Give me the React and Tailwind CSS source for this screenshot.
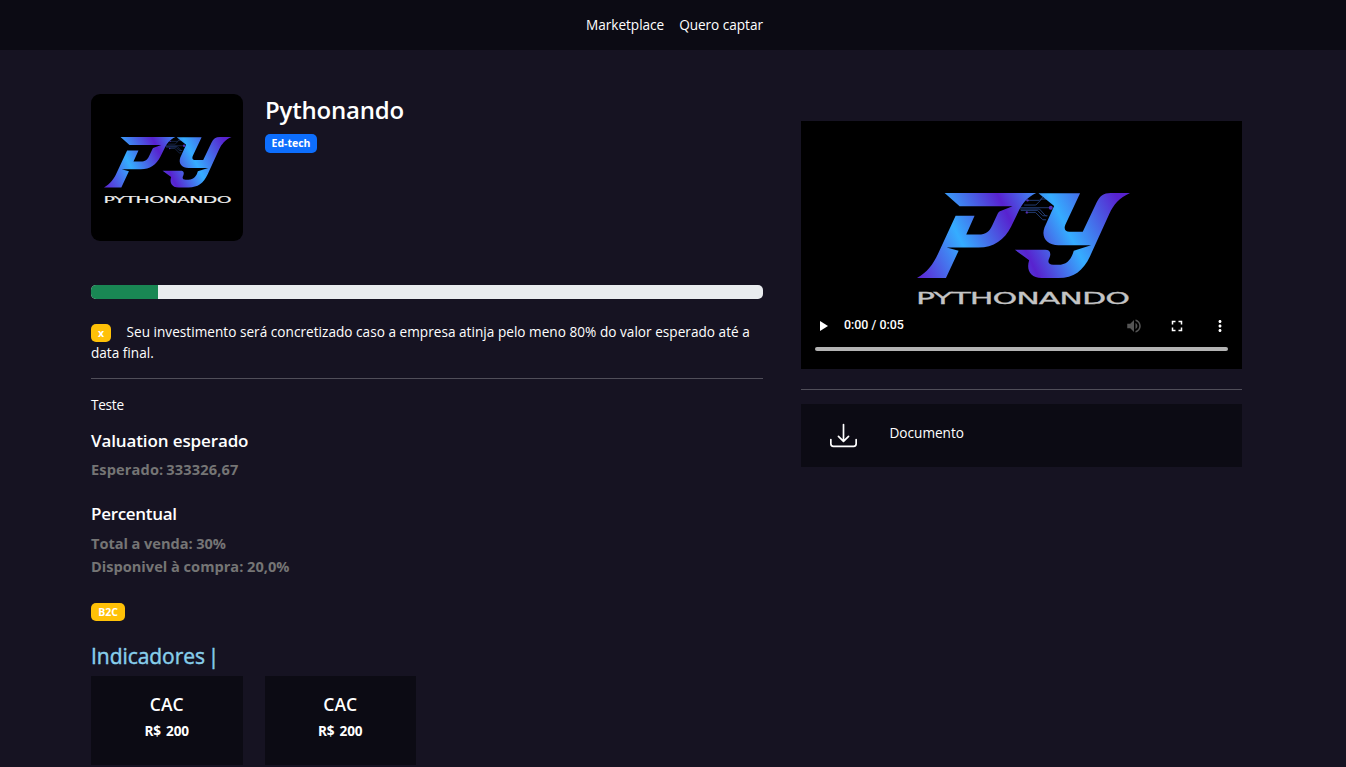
import React from "react";

function Logo({ id, className, textFill }) {
  return (
    <svg viewBox="50 40 640 350" preserveAspectRatio="none" className={className} aria-hidden="true">
      <defs>
        <linearGradient id={id} gradientUnits="userSpaceOnUse" x1="60" y1="290" x2="628" y2="6">
          <stop offset="0" stopColor="#5b2bd6" />
          <stop offset="0.246" stopColor="#35adff" />
          <stop offset="0.5" stopColor="#5822cf" />
          <stop offset="0.72" stopColor="#35adff" />
          <stop offset="1" stopColor="#5822cf" />
        </linearGradient>
      </defs>
      <g fill="none" stroke="#26407a" strokeWidth="2.8">
        <path d="M372 76h35l18-18h14M360 84h88M362 92h50l16 16h14M382 62h36l12-12M382 98h24l22 22h10M360 88h58l20 22" />
      </g>
      <g fill="#5430b8">
        <circle cx="452" cy="84" r="6" />
        <circle cx="382" cy="62" r="3.5" />
        <circle cx="380" cy="98" r="3.5" />
      </g>
      <g fill={`url(#${id})`}>
        <path d="M133 40H408C380 53 366 72 354 97L333 140C313 180 280 203 235 203H139L175 213L137 294H50C82 277 100 251 115 218L166 108H223L198 164H235C257 164 268 155 276 137L292 103C294 98 297 95 303 93L337 80H178Z" />
        <path d="M415 41H540L496 134C490 148 496 156 508 156H548L590 68C599 49 611 40 632 40H690C658 54 640 76 628 102L570 229C549 273 521 294 475 294H425C389 294 378 268 387 241L344 210H435C449 210 454 219 448 234C441 247 446 255 459 255H474C501 255 514 238 521 213L573 196H475C441 196 422 174 433 143L462 79Z" />
      </g>
      <text
        x="47"
        y="371"
        fontFamily="'DejaVu Sans', sans-serif"
        fontSize="47"
        letterSpacing="-1.5"
        textLength="640"
        lengthAdjust="spacingAndGlyphs"
        fill={textFill}
        stroke={textFill}
        strokeWidth="0.8"
      >
        PYTHONANDO
      </text>
    </svg>
  );
}

function Player() {
  return (
    <div className="flex h-[248px] flex-col bg-black">
      <div className="flex justify-center pt-[72px] pl-[4px]">
        <Logo id="video-logo" textFill="#c4c4c4" className="h-[117px] w-[213px]" />
      </div>
      <div className="mt-[4.5px] flex h-[22px] items-center pl-[18px] pr-[13px]">
        <svg width="10" height="12" viewBox="0 0 10 12" fill="#fff" className="mt-[1px]">
          <path d="M1 1v10l8-5z" />
        </svg>
        <span className="ml-[15px] -mt-[1px] font-['Roboto',sans-serif] text-[12.4px] font-medium leading-[16px] text-white">
          0:00 / 0:05
        </span>
        <div className="ml-auto flex items-center gap-[25px] text-white">
          <svg width="18" height="18" viewBox="0 0 24 24" fill="#555">
            <path d="M3 9v6h4l5 5V4L7 9H3zm13.5 3c0-1.77-1.02-3.29-2.5-4.03v8.05c1.48-.73 2.5-2.25 2.5-4.02zM14 3.23v2.06c2.89.86 5 3.54 5 6.71s-2.11 5.85-5 6.71v2.06c4.01-.91 7-4.49 7-8.77s-2.99-7.86-7-8.77z" />
          </svg>
          <svg width="18" height="18" viewBox="0 0 24 24" fill="#fff">
            <path d="M7 14H5v5h5v-2H7v-3zm-2-4h2V7h3V5H5v5zm12 7h-3v2h5v-5h-2v3zM14 5v2h3v3h2V5h-5z" />
          </svg>
          <svg width="18" height="18" viewBox="0 0 24 24" fill="#fff">
            <path d="M12 8c1.1 0 2-.9 2-2s-.9-2-2-2-2 .9-2 2 .9 2 2 2zm0 2c-1.1 0-2 .9-2 2s.9 2 2 2 2-.9 2-2-.9-2-2-2zm0 6c-1.1 0-2 .9-2 2s.9 2 2 2 2-.9 2-2-.9-2-2-2z" />
          </svg>
        </div>
      </div>
      <div className="mx-[14px] mt-[10px] h-[4px] rounded-full bg-[#b3b3b3]" />
    </div>
  );
}

function Indicator({ name, value }) {
  return (
    <div className="h-[89px] w-[151.5px] bg-[#0c0b14] pt-[17px] text-center">
      <div className="text-[17.5px] font-semibold leading-[22px]">{name}</div>
      <div className="mt-[5px] text-[13.6px] font-bold leading-[22px] tracking-[-0.1px] [word-spacing:1.5px]">{value}</div>
    </div>
  );
}

export default function App() {
  return (
    <div className="h-[767px] overflow-hidden bg-[#161322] font-['Open_Sans','Noto_Sans',sans-serif] text-[13.6px] leading-[21.6px] text-white">
      <header className="flex h-[50px] items-center justify-center gap-[15px] bg-[#0c0b14] pl-[3px]">
        <a className="whitespace-nowrap tracking-[-0.03px]">Marketplace</a>
        <a className="whitespace-nowrap tracking-[-0.03px]">Quero captar</a>
      </header>

      <main className="flex items-start gap-[38px] pl-[91px] pt-[44px]">
        <section className="w-[672px]">
          <div className="flex gap-[22px]">
            <div className="flex h-[147px] w-[152px] justify-center rounded-[9px] bg-black pl-[2px] pt-[42.5px]">
              <Logo id="company-logo" textFill="#eeeeee" className="h-[69.5px] w-[127.5px]" />
            </div>
            <div>
              <h1 className="mt-[1px] text-[24px] font-semibold leading-[30px] tracking-[-0.2px]">Pythonando</h1>
              <span className="mt-[9px] flex h-[19px] w-[52px] items-center justify-center rounded-[5px] bg-[#0d6efd] text-[10.5px] font-bold leading-none">
                Ed-tech
              </span>
            </div>
          </div>

          <div className="mt-[44px] h-[14px] overflow-hidden rounded-[5px] bg-[#e9ecef]">
            <div className="h-full w-[10%] bg-[#198754]" />
          </div>

          <div className="mt-[22px]">
            <div className="flex h-[21px] items-center">
              <span className="mr-[15.5px] mt-[3px] flex h-[18px] w-[20px] items-center justify-center rounded-[5px] bg-[#ffc107] text-[10.5px] font-bold leading-none">
                x
              </span>
              <span className="whitespace-nowrap tracking-[0.024px]">
                Seu investimento será concretizado caso a empresa atinja pelo meno 80% do valor esperado até a
              </span>
            </div>
            <div className="h-[21px]">data final.</div>
          </div>
          <div className="mt-[15px] h-px bg-[#504e59]" />

          <p className="mt-[15px] tracking-[-0.25px]">Teste</p>
          <h2 className="mt-[14px] text-[17px] font-semibold leading-[21.6px] tracking-[-0.12px]">Valuation esperado</h2>
          <p className="mt-[7px] text-[14.6px] font-bold leading-[23px] tracking-[0.14px] text-[#757575] [word-spacing:-1px]">
            Esperado: 333326,67
          </p>
          <h2 className="mt-[22px] text-[17px] font-semibold leading-[21.6px] tracking-[-0.3px]">Percentual</h2>
          <p className="mt-[7px] text-[14.6px] font-bold leading-[23px] text-[#757575]">
            <span className="tracking-[-0.05px]">Total a venda: 30%</span>
            <br />
            Disponivel à compra: 20,0%
          </p>
          <span className="mt-[25px] flex h-[18px] w-[34px] items-center justify-center rounded-[5px] bg-[#ffc107] text-[10.5px] font-bold leading-none">
            B2C
          </span>

          <h2 className="mt-[22px] text-[21px] font-medium leading-[26px] tracking-[-0.05px] text-[#87ceeb] [-webkit-text-stroke:0.45px_#87ceeb] [word-spacing:-2.5px]">
            Indicadores |
          </h2>
          <div className="mt-[7px] flex gap-[22px]">
            <Indicator name="CAC" value="R$ 200" />
            <Indicator name="CAC" value="R$ 200" />
          </div>
        </section>

        <aside className="w-[441px] pt-[27px]">
          <Player />
          <div className="mt-[20px] h-px bg-[#504e59]" />
          <div className="mt-[14px] flex h-[63px] bg-[#0c0b14] pl-[29px] pt-[18px]">
            <svg width="27" height="27" viewBox="0 0 16 16" fill="#fff">
              <path d="M.5 9.9a.5.5 0 0 1 .5.5v2.5a1 1 0 0 0 1 1h12a1 1 0 0 0 1-1v-2.5a.5.5 0 0 1 1 0v2.5a2 2 0 0 1-2 2H2a2 2 0 0 1-2-2v-2.5a.5.5 0 0 1 .5-.5z" />
              <path d="M7.646 11.854a.5.5 0 0 0 .708 0l3-3a.5.5 0 0 0-.708-.708L8.5 10.293V1.5a.5.5 0 0 0-1 0v8.793L5.354 8.146a.5.5 0 1 0-.708.708l3 3z" />
            </svg>
            <span className="ml-[32.5px]">Documento</span>
          </div>
        </aside>
      </main>
    </div>
  );
}
